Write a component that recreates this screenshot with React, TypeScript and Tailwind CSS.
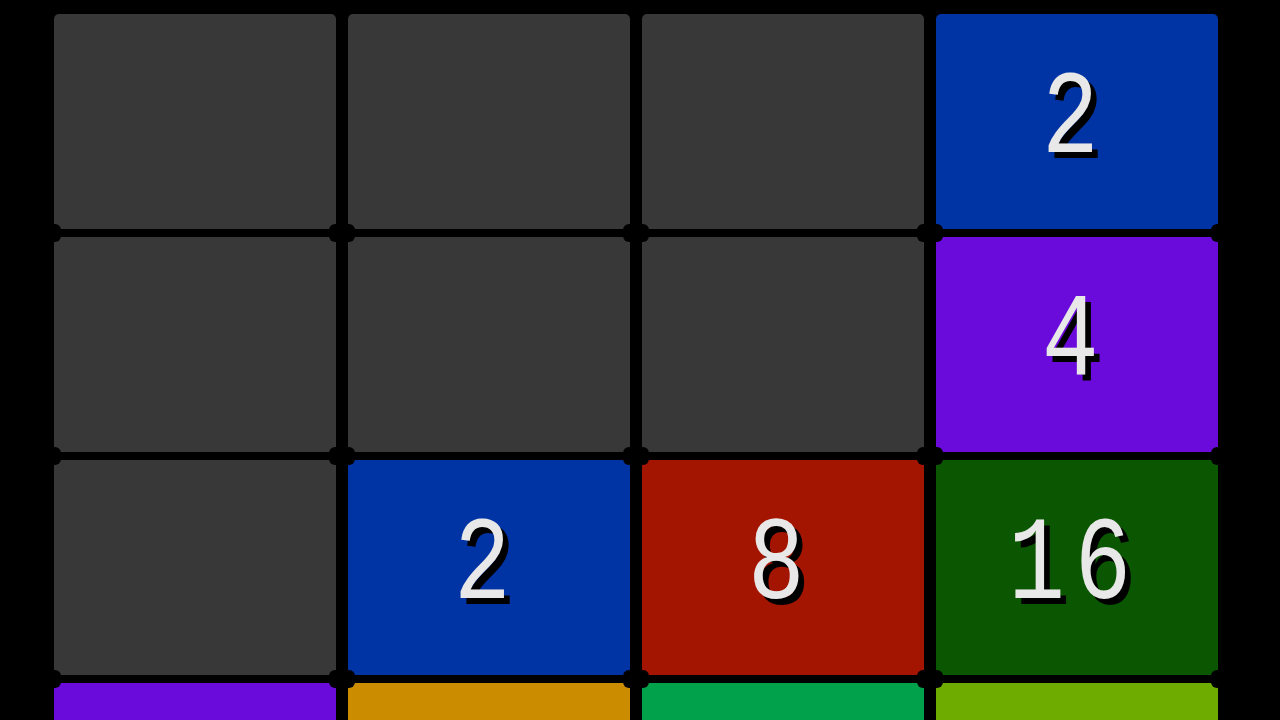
import React from 'react'

type Tile = { v: number | null; bg: string }

// board state, row by row; the bottom row is only partly in view
const BOARD: Tile[][] = [
  [
    { v: null, bg: 'bg-[#383838]' },
    { v: null, bg: 'bg-[#383838]' },
    { v: null, bg: 'bg-[#383838]' },
    { v: 2, bg: 'bg-[#0033a3]' },
  ],
  [
    { v: null, bg: 'bg-[#383838]' },
    { v: null, bg: 'bg-[#383838]' },
    { v: null, bg: 'bg-[#383838]' },
    { v: 4, bg: 'bg-[#6a0adb]' },
  ],
  [
    { v: null, bg: 'bg-[#383838]' },
    { v: 2, bg: 'bg-[#0033a3]' },
    { v: 8, bg: 'bg-[#a31500]' },
    { v: 16, bg: 'bg-[#0b5600]' },
  ],
  [
    { v: null, bg: 'bg-[#6a0adb]' },
    { v: null, bg: 'bg-[#cc8c00]' },
    { v: null, bg: 'bg-[#00a14a]' },
    { v: null, bg: 'bg-[#6eac00]' },
  ],
]

// grid metrics (px) used to drop the black joints where four cells meet
const COL_W = 282
const COL_GAP = 12
const ROW_H = 215
const ROW_GAP = 8

function Cell({ v, bg }: Tile) {
  return (
    <div className={`${bg} rounded-[5px] flex items-start justify-center pt-[48px] pr-[14px]`}>
      {v != null && (
        <span
          className="block text-[118px] leading-[1] text-[#e8e8e8] tracking-[12px] pl-[12px] scale-x-[0.8] [text-shadow:7px_6px_0_#000]"
          style={{ fontFamily: '"Liberation Mono", "DejaVu Sans Mono", monospace' }}
        >
          {v}
        </span>
      )}
    </div>
  )
}

export default function App() {
  const joints: { x: number; y: number }[] = []
  for (let r = 1; r < 4; r++) {
    for (let c = 0; c <= 4; c++) {
      joints.push({
        x: c * (COL_W + COL_GAP) - COL_GAP / 2,
        y: r * (ROW_H + ROW_GAP) - ROW_GAP / 2,
      })
    }
  }

  return (
    <div className="h-screen w-screen bg-black overflow-hidden pl-[54px] pt-[14px]">
      <div className="relative w-[1164px]">
        <div className="grid grid-cols-[repeat(4,282px)] grid-rows-[repeat(4,215px)] gap-x-[12px] gap-y-[8px]">
          {BOARD.flat().map((t, i) => (
            <Cell key={i} v={t.v} bg={t.bg} />
          ))}
        </div>
        {joints.map((j, i) => (
          <div
            key={i}
            className="absolute w-[26px] h-[18px] bg-black rounded-[6px]"
            style={{ left: j.x - 13, top: j.y - 9 }}
          />
        ))}
      </div>
    </div>
  )
}
